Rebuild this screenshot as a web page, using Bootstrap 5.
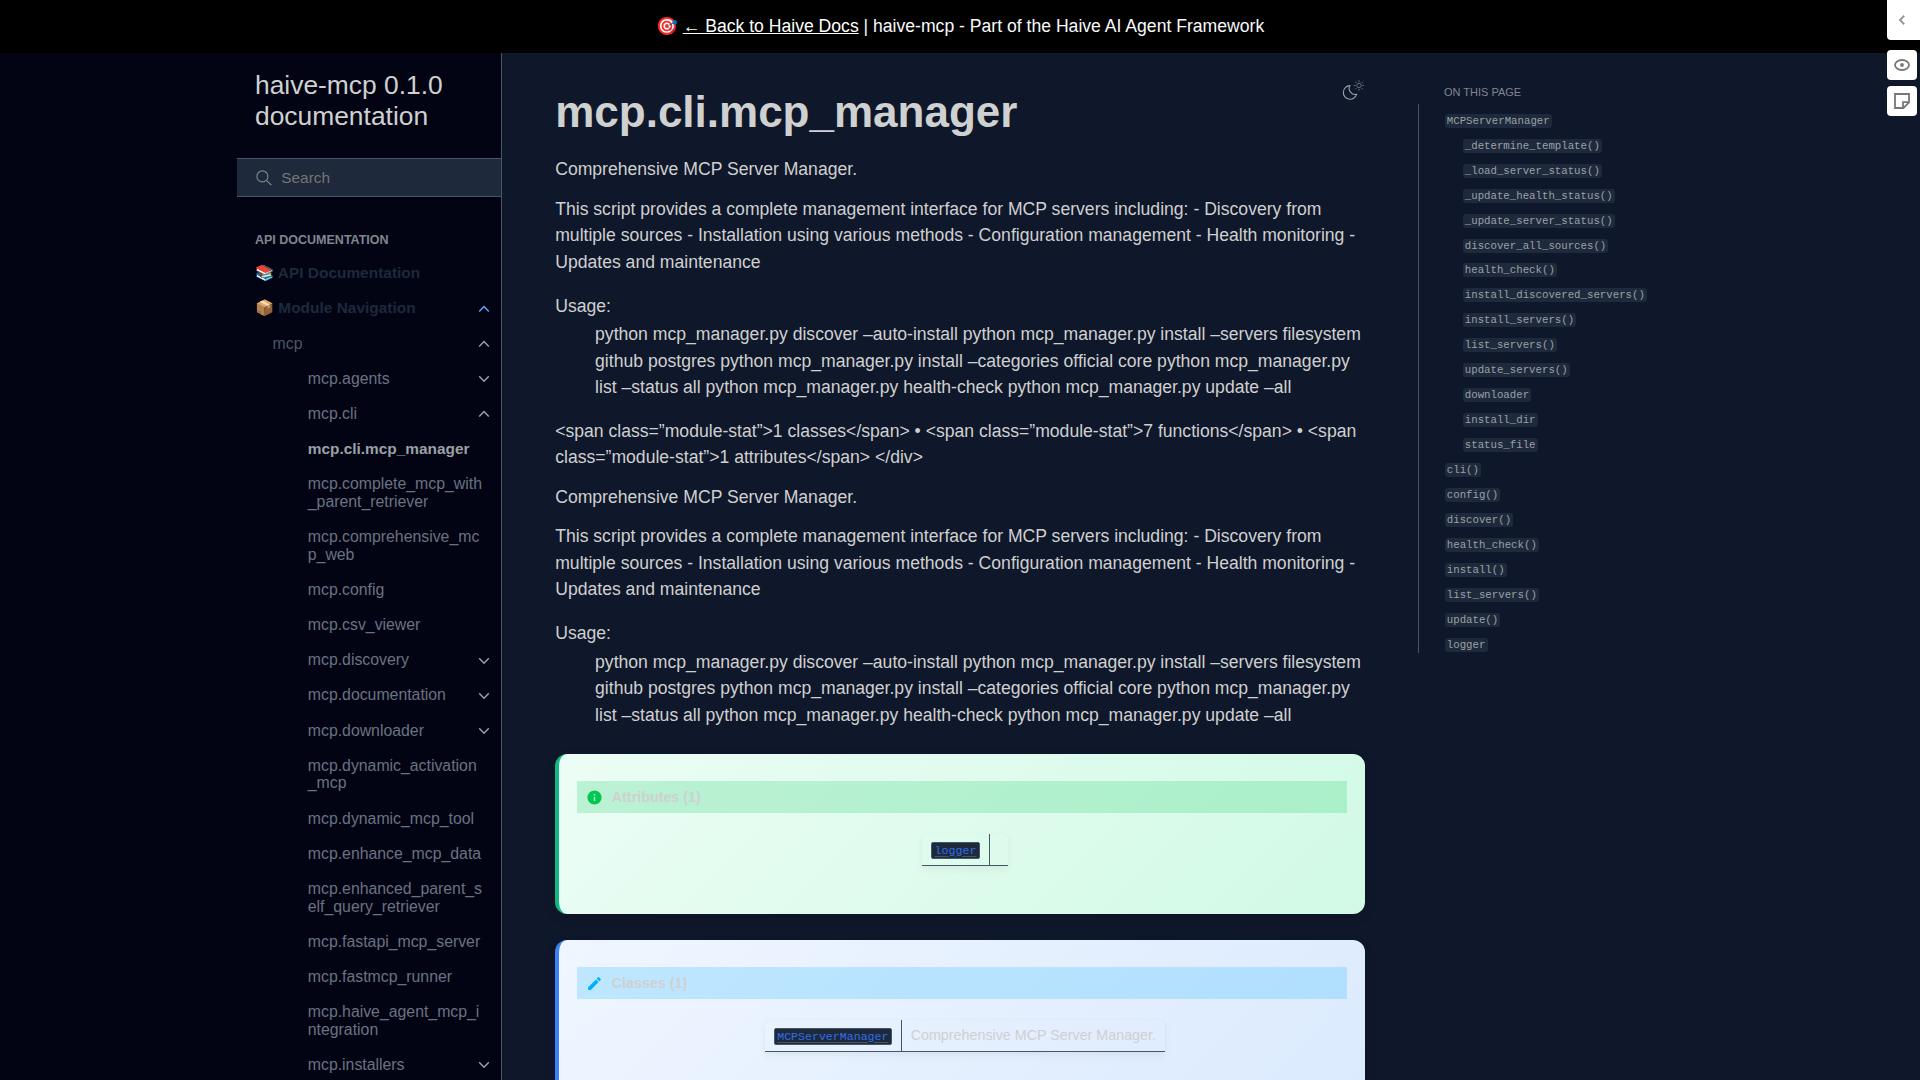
<!DOCTYPE html>
<html lang="en">
<head>
<meta charset="utf-8">
<title>mcp.cli.mcp_manager - haive-mcp 0.1.0 documentation</title>
<link href="https://cdn.jsdelivr.net/npm/bootstrap@5.3.0/dist/css/bootstrap.min.css" rel="stylesheet">
<style>
html{font-size:17.6px}
body{font-family:"Liberation Sans",Arial,sans-serif;font-size:17.6px;line-height:1.5;color:#cfd0d0;background:#0f172a;height:1080px;overflow:hidden}
svg{display:block;flex:none}
.announce{background:#000;color:#f8fafc;height:53px;font-size:17.6px}
.announce a{color:#fff;text-underline-offset:auto}
.page{height:1027px}
.side{width:502.4px;background:#020414;border-right:1px solid #475569}
.side-in{width:264px}
.brand{font-size:26.4px;line-height:31px;padding:17px 17.6px 26px;margin-bottom:0}
.search{height:39px;background:#1e293b;border-top:1px solid #475569;border-bottom:1px solid #475569;padding-left:18.5px;font-size:15.4px;color:#757575;gap:9.4px}
.caption{font-size:12.5px;line-height:20px;color:#81868d;margin:33px 0 5.4px 17.6px;font-weight:bold}
.tree .item{font-size:15.84px;line-height:17.6px;padding:8.8px 0 8.8px 70.4px;color:#6b7280}
.item span{width:175.5px;word-break:break-all}
.item svg{margin:1px 11px 0 auto;color:#9ca0a5;align-self:center}
.tree .top{font-size:15.4px;font-weight:bold;color:#1e293b;padding-left:17.6px}
.tree .top span{width:200px;letter-spacing:.03px}
.tree .lv1{font-size:15.84px;padding-left:35.2px;color:#4b5563}
.tree .current{font-size:15.4px;font-weight:bold;color:#9ca0a5}
.main{width:915.2px;padding:0 52.8px}
.main h1{font-size:44px;line-height:55px;font-weight:bold;margin:31px 0 17.2px}
.main p{margin:0 0 13.2px}
.main dl{margin:17.6px 0}
.main dt{font-weight:normal;line-height:26.4px}
.main dd{margin:2.2px 0 0 39.9px}
.panel{border-left:4px solid;border-radius:12px;padding:27px 17.6px 0;height:160px;margin-bottom:26px;box-shadow:0 4px 12px rgba(0,0,0,.1)}
.green{border-color:#10b981;background:linear-gradient(135deg,#ecfdf5,#d1fae5)}
.blue{border-color:#3b82f6;background:linear-gradient(135deg,#eff6ff,#dbeafe)}
.ptitle{height:32px;font-size:14.3px;font-weight:bold;padding:1px 0 0 9px;gap:9px}
.green .ptitle{background:rgba(0,200,83,.2)}
.blue .ptitle{background:rgba(0,176,255,.2)}
.tbl{font-size:14.3px;border-bottom:1px solid #475569;border-radius:4px 4px 0 0;box-shadow:0 4px 8px rgba(0,0,0,.05),0 0 1px rgba(0,0,0,.1);margin:21px 0 0 6px;height:32px}
.tbl div{padding:0 9px;display:flex;align-items:center}
.tbl div+div{border-left:1px solid #475569}
.main code{font-family:"Liberation Mono",monospace;font-size:11.6px;line-height:13px;background:#1e293b;border:1px solid #475569;border-radius:2px;padding:1px 2.2px;margin-top:1.5px;color:#2f6fea;text-decoration:underline;text-decoration-color:#475569;text-underline-offset:2px}
.toggle{position:absolute;right:53.5px;top:25.5px;color:#9ca0a5}
.toc-title{font-size:11px;line-height:18px;color:#81868d;margin:29.5px 0 3.5px 26.4px}
.toc{border-left:1px solid #475569;padding:4.4px 0 0 26px;height:549px}
.toc div{height:24.95px;display:flex;align-items:center}
.toc .sub{padding-left:18px}
.toc code{font-family:"Liberation Mono",monospace;font-size:10.725px;line-height:14px;height:14px;color:#9ca0a5;background:#1e293b;border-radius:3px;padding:0 2.2px}
.dock{position:fixed;right:0;top:0;width:33px;color:#777}
.dock div{background:#fff;width:30px;height:30px;border-radius:4px;display:flex;align-items:center;justify-content:center;margin-bottom:6px}
.dock .first{width:33px;height:40px;border-radius:0 0 0 4px;margin-bottom:10px;color:#999;padding-right:3px}
</style>
<script src="https://cdn.jsdelivr.net/npm/bootstrap@5.3.0/dist/js/bootstrap.bundle.min.js"></script>
</head>
<body>
<svg class="d-none"><defs>
<symbol id="chev" viewBox="0 0 12 8"><path d="M1.2 1.3 6 6.2 10.8 1.3" fill="none" stroke="currentColor" stroke-width="1.5"/></symbol>
<symbol id="chevup" viewBox="0 0 12 8"><path d="M1.2 6.5 6 1.6 10.8 6.5" fill="none" stroke="currentColor" stroke-width="1.5"/></symbol>
</defs></svg>
<header class="announce d-flex justify-content-center align-items-center"><div>🎯 <a href="#">← Back to Haive Docs</a> | haive-mcp - Part of the Haive AI Agent Framework</div></header>
<div class="page d-flex">
<aside class="side d-flex justify-content-end flex-shrink-0 overflow-hidden"><div class="side-in">
<div class="brand">haive-mcp 0.1.0 documentation</div>
<div class="search d-flex align-items-center"><svg width="16" height="16" viewBox="0 0 16 16" fill="none" stroke="#81868d" stroke-width="1.1"><circle cx="6.4" cy="6.4" r="5.5"/><path d="m10.4 10.4 4.9 4.6"/></svg>Search</div>
<div class="caption">API DOCUMENTATION</div>
<nav class="tree">
<div class="item top d-flex"><span>📚 API Documentation</span></div>
<div class="item top d-flex"><span>📦 Module Navigation</span><svg width="12" height="8" style="color:#60a5fa"><use href="#chevup"/></svg></div>
<div class="item lv1 d-flex"><span>mcp</span><svg width="12" height="8"><use href="#chevup"/></svg></div>
<div class="item d-flex"><span>mcp.agents</span><svg width="12" height="8"><use href="#chev"/></svg></div>
<div class="item d-flex"><span>mcp.cli</span><svg width="12" height="8"><use href="#chevup"/></svg></div>
<div class="item current d-flex"><span>mcp.cli.mcp_manager</span></div>
<div class="item d-flex"><span>mcp.complete_mcp_with_parent_retriever</span></div>
<div class="item d-flex"><span>mcp.comprehensive_mcp_web</span></div>
<div class="item d-flex"><span>mcp.config</span></div>
<div class="item d-flex"><span>mcp.csv_viewer</span></div>
<div class="item d-flex"><span>mcp.discovery</span><svg width="12" height="8"><use href="#chev"/></svg></div>
<div class="item d-flex"><span>mcp.documentation</span><svg width="12" height="8"><use href="#chev"/></svg></div>
<div class="item d-flex"><span>mcp.downloader</span><svg width="12" height="8"><use href="#chev"/></svg></div>
<div class="item d-flex"><span>mcp.dynamic_activation_mcp</span></div>
<div class="item d-flex"><span>mcp.dynamic_mcp_tool</span></div>
<div class="item d-flex"><span>mcp.enhance_mcp_data</span></div>
<div class="item d-flex"><span>mcp.enhanced_parent_self_query_retriever</span></div>
<div class="item d-flex"><span>mcp.fastapi_mcp_server</span></div>
<div class="item d-flex"><span>mcp.fastmcp_runner</span></div>
<div class="item d-flex"><span>mcp.haive_agent_mcp_integration</span></div>
<div class="item d-flex"><span>mcp.installers</span><svg width="12" height="8"><use href="#chev"/></svg></div>
</nav>
</div></aside>
<main class="main position-relative flex-shrink-0">
<div class="toggle"><svg width="22" height="22" viewBox="0 0 22 22" fill="none" stroke="currentColor" stroke-width="1.1"><path d="M7.8 6.6A6.8 6.8 0 1 0 14.6 15.4 6.2 6.2 0 0 1 7.8 6.6Z"/><g stroke-width=".8" opacity=".75"><circle cx="17" cy="6.5" r="2.2"/><path d="M17 1.2v2M17 9.8v2M11.7 6.5h2M20.2 6.5h1.8M13.2 2.7l1.4 1.4M19.4 8.9l1.4 1.4M20.8 2.7l-1.4 1.4M14.6 8.9l-1.4 1.4"/></g></svg></div>
<h1>mcp.cli.mcp_manager</h1>
<p>Comprehensive MCP Server Manager.</p>
<p>This script provides a complete management interface for MCP servers including: - Discovery from multiple sources - Installation using various methods - Configuration management - Health monitoring - Updates and maintenance</p>
<dl><dt>Usage:</dt><dd>python mcp_manager.py discover –auto-install python mcp_manager.py install –servers filesystem github postgres python mcp_manager.py install –categories official core python mcp_manager.py list –status all python mcp_manager.py health-check python mcp_manager.py update –all</dd></dl>
<p>&lt;span class=”module-stat”&gt;1 classes&lt;/span&gt; • &lt;span class=”module-stat”&gt;7 functions&lt;/span&gt; • &lt;span class=”module-stat”&gt;1 attributes&lt;/span&gt; &lt;/div&gt;</p>
<p>Comprehensive MCP Server Manager.</p>
<p>This script provides a complete management interface for MCP servers including: - Discovery from multiple sources - Installation using various methods - Configuration management - Health monitoring - Updates and maintenance</p>
<dl class="mb-0"><dt>Usage:</dt><dd>python mcp_manager.py discover –auto-install python mcp_manager.py install –servers filesystem github postgres python mcp_manager.py install –categories official core python mcp_manager.py list –status all python mcp_manager.py health-check python mcp_manager.py update –all</dd></dl>
<section class="panel green" style="margin-top:25.8px">
<div class="ptitle d-flex align-items-center"><svg width="17" height="17" viewBox="0 0 24 24" fill="#00c853"><path d="M13 9h-2V7h2m0 10h-2v-6h2m-1-9A10 10 0 0 0 2 12a10 10 0 0 0 10 10 10 10 0 0 0 10-10A10 10 0 0 0 12 2Z"/></svg>Attributes (1)</div>
<div class="d-flex justify-content-center"><div class="tbl d-flex"><div><code>logger</code></div><div></div></div></div>
</section>
<section class="panel blue">
<div class="ptitle d-flex align-items-center"><svg width="17" height="17" viewBox="0 0 24 24" fill="#00b0ff"><path d="M20.71 7.04c.39-.39.39-1.04 0-1.41l-2.34-2.34c-.37-.39-1.02-.39-1.41 0l-1.84 1.83 3.75 3.75M3 17.25V21h3.75L17.81 9.93l-3.75-3.75L3 17.25Z"/></svg>Classes (1)</div>
<div class="d-flex justify-content-center"><div class="tbl d-flex"><div><code>MCPServerManager</code></div><div>Comprehensive MCP Server Manager.</div></div></div>
</section>
</main>
<aside class="flex-grow-1">
<div class="toc-title">ON THIS PAGE</div>
<nav class="toc">
<div><code>MCPServerManager</code></div>
<div class="sub"><code>_determine_template()</code></div>
<div class="sub"><code>_load_server_status()</code></div>
<div class="sub"><code>_update_health_status()</code></div>
<div class="sub"><code>_update_server_status()</code></div>
<div class="sub"><code>discover_all_sources()</code></div>
<div class="sub"><code>health_check()</code></div>
<div class="sub"><code>install_discovered_servers()</code></div>
<div class="sub"><code>install_servers()</code></div>
<div class="sub"><code>list_servers()</code></div>
<div class="sub"><code>update_servers()</code></div>
<div class="sub"><code>downloader</code></div>
<div class="sub"><code>install_dir</code></div>
<div class="sub"><code>status_file</code></div>
<div><code>cli()</code></div>
<div><code>config()</code></div>
<div><code>discover()</code></div>
<div><code>health_check()</code></div>
<div><code>install()</code></div>
<div><code>list_servers()</code></div>
<div><code>update()</code></div>
<div><code>logger</code></div>
</nav>
</aside>
</div>
<div class="dock">
<div class="first"><svg width="8" height="10" viewBox="0 0 8 10" fill="none" stroke="currentColor" stroke-width="2"><path d="M6.2.8 2 5l4.2 4.2"/></svg></div>
<div><svg width="16" height="12" viewBox="0 0 16 12" fill="none" stroke="currentColor" stroke-width="1.8"><ellipse cx="8" cy="6" rx="7" ry="5"/><circle cx="8" cy="6" r="1.9" fill="currentColor" stroke="none"/></svg></div>
<div><svg width="16" height="16" viewBox="0 0 16 16" fill="none" stroke="currentColor" stroke-width="1.8"><path d="M1 1h14v8.5L9.5 15H1ZM9 15V9.2h6"/></svg></div>
</div>
</body>
</html>
